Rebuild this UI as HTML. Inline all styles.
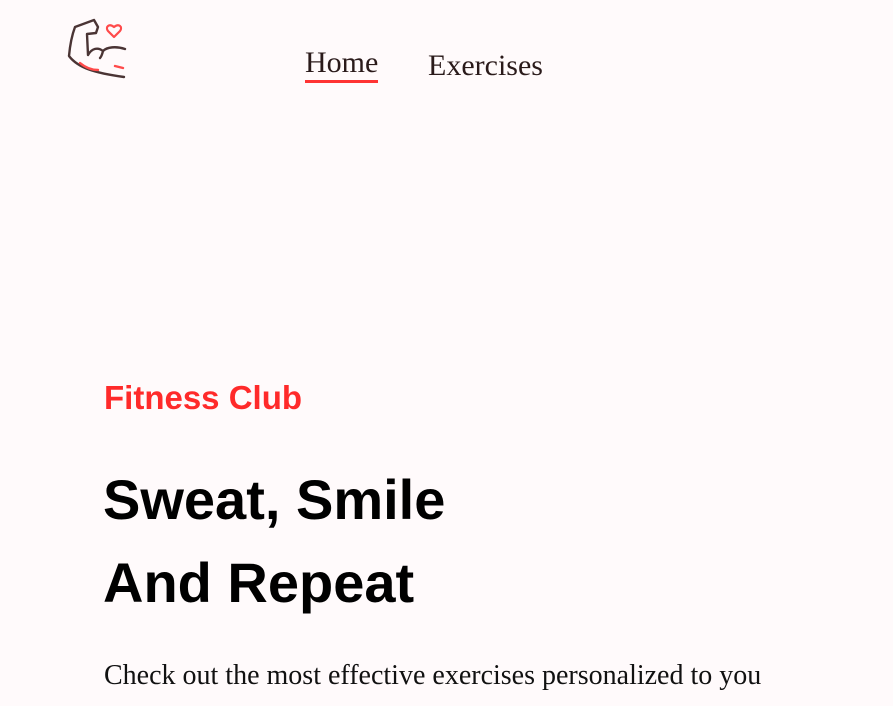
<!DOCTYPE html>
<html><head><style>
body{margin:0;background:#fffafb;width:893px;height:706px;overflow:hidden;position:relative;font-family:"Liberation Serif",serif;}
.a{position:absolute;white-space:nowrap}
</style></head><body>
<svg class="a" style="left:60px;top:14px" width="70" height="70" viewBox="60 14 70 70" fill="none" stroke-linecap="round" stroke-linejoin="round">
<path d="M69 56 C70 45 72 35 75 27 L94 20 L98 27 L96 33 L87 34 L88 55 M88 55 C92 48 98 47 103 51 C107 47 116 46 125 49 M69 56 C78 68 95 73 124 77 M103 51 C102 55 101 57 100 58" stroke="#4a3434" stroke-width="2.4"/>
<path d="M80 63 C86 68 92 70 98 70 M115 66 L123 68" stroke="#ff4a4a" stroke-width="2.4"/>
<path d="M114 37 L108 31 C105 27 109 23 114 27 C119 23 123 27 120 31 Z" stroke="#ff4a4a" stroke-width="2.2"/>
</svg>
<div class="a" style="left:305px;top:46px;font-size:30px;color:#2a1a1a">Home</div>
<div class="a" style="left:305px;top:80px;width:73px;height:3px;background:#ff3333"></div>
<div class="a" style="left:428px;top:49px;font-size:30px;color:#2a1a1a">Exercises</div>
<div class="a" style="left:104px;top:379px;font:bold 33px 'Liberation Sans',sans-serif;color:#ff2a2a">Fitness Club</div>
<div class="a" style="left:103px;top:458px;font:bold 56px/83px 'Liberation Sans',sans-serif;color:#000">Sweat, Smile<br>And Repeat</div>
<div class="a" style="left:104px;top:660px;font-size:28px;color:#111">Check out the most effective exercises personalized to you</div>
</body></html>
